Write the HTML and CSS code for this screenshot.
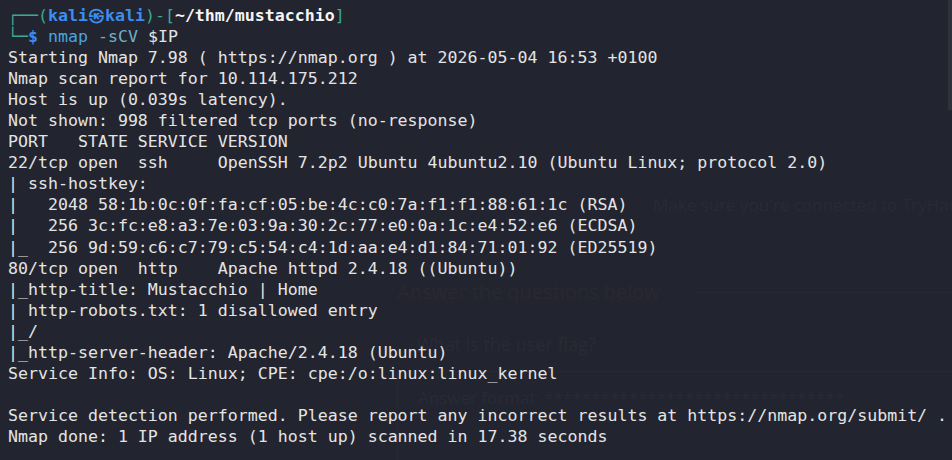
FILE: index.html
```html
<!DOCTYPE html>
<html>
<head>
<meta charset="utf-8">
<link rel="stylesheet" href="styles.css">
</head>
<body>
<div class="ghost">
  <div class="ghost-divider"></div>
  <div class="ghost-content">
    <div class="ghost-notice">Make sure you're connected to TryHackMe's network</div>
    <div class="ghost-head">
      <span class="ghost-title">Answer the questions below</span>
      <span class="ghost-rule"></span>
    </div>
    <div class="ghost-question">What is the user flag?</div>
    <div class="ghost-box">
      <span class="ghost-format">Answer format: ********************************</span>
    </div>
  </div>
  <div class="scrollbar"></div>
</div>
<pre class="term"><span class="g">┌──(</span><span class="u">kali㉿kali</span><span class="g">)-[</span><span class="w">~/thm/mustacchio</span><span class="g">]</span>
<span class="g">└─</span><span class="u">$</span> <span class="cmd">nmap</span> <span class="opt">-sCV</span> $IP
Starting Nmap 7.98 ( https://nmap.org ) at 2026-05-04 16:53 +0100
Nmap scan report for 10.114.175.212
Host is up (0.039s latency).
Not shown: 998 filtered tcp ports (no-response)
PORT   STATE SERVICE VERSION
22/tcp open  ssh     OpenSSH 7.2p2 Ubuntu 4ubuntu2.10 (Ubuntu Linux; protocol 2.0)
| ssh-hostkey:
|   2048 58:1b:0c:0f:fa:cf:05:be:4c:c0:7a:f1:f1:88:61:1c (RSA)
|   256 3c:fc:e8:a3:7e:03:9a:30:2c:77:e0:0a:1c:e4:52:e6 (ECDSA)
|_  256 9d:59:c6:c7:79:c5:54:c4:1d:aa:e4:d1:84:71:01:92 (ED25519)
80/tcp open  http    Apache httpd 2.4.18 ((Ubuntu))
|_http-title: Mustacchio | Home
| http-robots.txt: 1 disallowed entry
|_/
|_http-server-header: Apache/2.4.18 (Ubuntu)
Service Info: OS: Linux; CPE: cpe:/o:linux:linux_kernel

Service detection performed. Please report any incorrect results at https://nmap.org/submit/ .
Nmap done: 1 IP address (1 host up) scanned in 17.38 seconds</pre>
</body>
</html>
```
FILE: styles.css
```css
html, body {
  margin: 0;
  padding: 0;
  width: 952px;
  height: 460px;
  overflow: hidden;
  background: #22242f;
}
body {
  position: relative;
}
.ghost {
  position: absolute;
  inset: 0;
  display: flex;
  overflow: hidden;
  font-family: "Open Sans", "Noto Sans", sans-serif;
}
.ghost-divider {
  width: 1px;
  margin-left: 354px;
  background: #26252d;
  height: 460px;
}
.ghost-content {
  flex: 1;
  min-width: 0;
  padding-left: 42px;
  padding-top: 192px;
  display: flex;
  flex-direction: column;
}
.ghost-notice {
  margin-left: 256px;
  font-size: 17px;
  color: #282b36;
  white-space: nowrap;
  line-height: 26px;
}
.ghost-head {
  margin-top: 60px;
  display: flex;
  align-items: center;
  gap: 36px;
}
.ghost-title {
  font-size: 20px;
  color: #2b2830;
  white-space: nowrap;
  line-height: 28px;
}
.ghost-rule {
  flex: 1;
  height: 1px;
  background: #272932;
}
.ghost-question {
  margin-top: 25px;
  margin-left: 20px;
  font-size: 18px;
  color: #292b35;
  line-height: 26px;
}
.ghost-box {
  margin-top: 14px;
  border-left: 1px solid #272932;
  border-top: 1px solid #272932;
  padding: 14px 0 0 20px;
  height: 80px;
}
.ghost-format {
  font-size: 17px;
  color: #282b35;
  white-space: nowrap;
}
.scrollbar {
  position: absolute;
  right: 0;
  top: 0;
  width: 4px;
  height: 110px;
  background: #2f313b;
}
.term {
  position: relative;
  margin: 0;
  padding: 5px 0 0 8px;
  font-family: "DejaVu Sans Mono", monospace;
  font-size: 16.6px;
  line-height: 21.05px;
  color: #e4e4e4;
  white-space: pre;
}
.g { color: #3fa88f; }
.u { color: #3b8ef0; font-weight: bold; }
.w { color: #f5f5f5; font-weight: bold; }
.cmd { color: #4aa3e0; }
.opt { color: #6bb3c9; }
```
